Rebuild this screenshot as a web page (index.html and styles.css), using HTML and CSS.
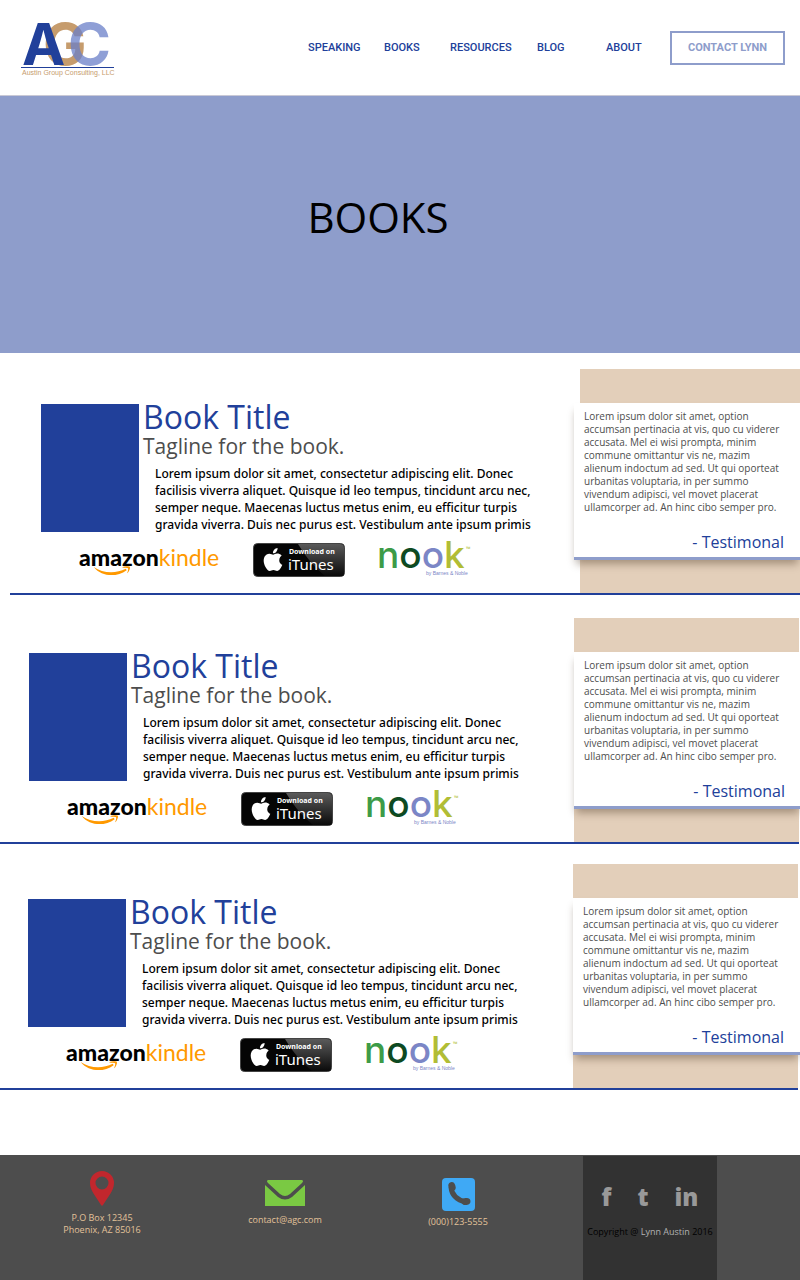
FILE: index.html
```html
<!DOCTYPE html>
<html lang="en">
<head>
<meta charset="utf-8">
<meta name="viewport" content="width=device-width, initial-scale=1">
<title>Books - Austin Group Consulting</title>
<link rel="stylesheet" href="styles.css">
</head>
<body>
<svg class="defs" width="0" height="0" aria-hidden="true">
  <defs>
    <linearGradient id="sheen" x1="0" y1="0" x2="0" y2="1">
      <stop offset="0" stop-color="#5a5a5a"/>
      <stop offset="1" stop-color="#0a0a0a"/>
    </linearGradient>
  </defs>
  <symbol id="smile" viewBox="0 0 42 12">
    <path d="M1 1C11 8 25 8.500 36 3l1 1.500C26 12.500 10 12 1 1z" fill="#f90"/>
    <path d="M32 1.500c3-1.500 8-1.500 8.500-.500s-.500 5-3 7c1-3 1.500-5 1-5.500s-3.500-.700-6.500-1z" fill="#f90"/>
  </symbol>
  <symbol id="badge" viewBox="0 0 92 34">
    <rect x=".5" y=".5" width="91" height="33" rx="4" fill="#050505" stroke="#444"/>
    <path d="M45 1h42q4 0 4 4v26q0 2-2 2H72Q56 20 45 1z" fill="url(#sheen)"/>
    <svg x="10" y="5" width="20" height="23" viewBox="1.500 0 21 24"><path fill="#fff" d="M12.152 6.896c-.948 0-2.415-1.078-3.960-1.040-2.040.027-3.910 1.183-4.961 3.014-2.117 3.675-.546 9.103 1.519 12.090 1.013 1.454 2.208 3.090 3.792 3.039 1.520-.065 2.090-.987 3.935-.987 1.831 0 2.350.987 3.960.948 1.637-.026 2.676-1.480 3.676-2.948 1.156-1.688 1.636-3.325 1.662-3.415-.039-.013-3.182-1.221-3.220-4.857-.026-3.040 2.480-4.494 2.597-4.559-1.429-2.090-3.623-2.324-4.390-2.376-2-.156-3.675 1.090-4.610 1.090zM15.530 3.830c.843-1.012 1.400-2.427 1.245-3.830-1.207.052-2.662.805-3.532 1.818-.780.896-1.454 2.338-1.273 3.714 1.338.104 2.715-.688 3.559-1.701"/></svg>
  </symbol>
</svg>

<header class="header">
  <a class="brand" href="#" aria-label="Austin Group Consulting, LLC">
    <svg width="96" height="56" viewBox="0 0 96 56">
      <text class="brand__g" x="22" y="45">G</text>
      <text class="brand__c" x="47" y="45">C</text>
      <text class="brand__a" x="1" y="45">A</text>
      <rect x="0" y="47" width="93" height="1" fill="#21409a"/>
      <text class="brand__name" x="1" y="55">Austin Group Consulting, LLC</text>
    </svg>
  </a>
  <nav class="nav">
    <a href="#">SPEAKING</a>
    <a href="#">BOOKS</a>
    <a href="#">RESOURCES</a>
    <a href="#">BLOG</a>
    <a href="#">ABOUT</a>
    <a class="nav__contact" href="#">CONTACT LYNN</a>
  </nav>
</header>

<main>
  <section class="hero"><h1 class="hero__title">BOOKS</h1></section>

  <article class="book book--first">
    <div class="book__main">
      <div class="book__cover"></div>
      <div class="book__text">
        <h2 class="book__title">Book Title</h2>
        <p class="book__tagline">Tagline for the book.</p>
        <p class="book__desc">Lorem ipsum dolor sit amet, consectetur adipiscing elit. Donec<br>facilisis viverra aliquet. Quisque id leo tempus, tincidunt arcu nec,<br>semper neque. Maecenas luctus metus enim, eu efficitur turpis<br>gravida viverra. Duis nec purus est. Vestibulum ante ipsum primis</p>
      </div>
      <div class="stores">
        <a href="#" aria-label="Amazon Kindle"><svg width="140" height="31" viewBox="0 0 140 31"><text class="kindle" x="0" y="20"><tspan class="kindle__a">amazon</tspan><tspan class="kindle__k">kindle</tspan></text><use href="#smile" x="12" y="20" width="42" height="11"/></svg></a>
        <a href="#" aria-label="Download on iTunes"><svg width="92" height="34" viewBox="0 0 92 34"><use href="#badge" width="92" height="34"/><text class="itunes__top" x="36" y="11">Download on</text><text class="itunes" x="35" y="27">iTunes</text></svg></a>
        <a href="#" aria-label="Nook by Barnes and Noble"><svg width="94" height="38" viewBox="0 0 94 38"><text class="nook" x="-2" y="29"><tspan fill="#3d9b47">n</tspan><tspan fill="#0e4a22">o</tspan><tspan fill="#7b86c6">o</tspan><tspan fill="#b1bd35">k</tspan></text><text class="nook__tm" x="87" y="12">™</text><text class="nook__by" x="47" y="36">by Barnes &amp; Noble</text></svg></a>
      </div>
    </div>
    <aside class="quote">
      <blockquote class="quote__card">
        <p class="quote__text">Lorem ipsum dolor sit amet, option<br>accumsan pertinacia at vis, quo cu viderer<br>accusata. Mel ei wisi prompta, minim<br>commune omittantur vis ne, mazim<br>alienum indoctum ad sed. Ut qui oporteat<br>urbanitas voluptaria, in per summo<br>vivendum adipisci, vel movet placerat<br>ullamcorper ad. An hinc cibo semper pro.</p>
        <footer class="quote__by">- Testimonal</footer>
      </blockquote>
    </aside>
  </article>

  <article class="book book--second">
    <div class="book__main">
      <div class="book__cover"></div>
      <div class="book__text">
        <h2 class="book__title">Book Title</h2>
        <p class="book__tagline">Tagline for the book.</p>
        <p class="book__desc">Lorem ipsum dolor sit amet, consectetur adipiscing elit. Donec<br>facilisis viverra aliquet. Quisque id leo tempus, tincidunt arcu nec,<br>semper neque. Maecenas luctus metus enim, eu efficitur turpis<br>gravida viverra. Duis nec purus est. Vestibulum ante ipsum primis</p>
      </div>
      <div class="stores">
        <a href="#" aria-label="Amazon Kindle"><svg width="140" height="31" viewBox="0 0 140 31"><text class="kindle" x="0" y="20"><tspan class="kindle__a">amazon</tspan><tspan class="kindle__k">kindle</tspan></text><use href="#smile" x="12" y="20" width="42" height="11"/></svg></a>
        <a href="#" aria-label="Download on iTunes"><svg width="92" height="34" viewBox="0 0 92 34"><use href="#badge" width="92" height="34"/><text class="itunes__top" x="36" y="11">Download on</text><text class="itunes" x="35" y="27">iTunes</text></svg></a>
        <a href="#" aria-label="Nook by Barnes and Noble"><svg width="94" height="38" viewBox="0 0 94 38"><text class="nook" x="-2" y="29"><tspan fill="#3d9b47">n</tspan><tspan fill="#0e4a22">o</tspan><tspan fill="#7b86c6">o</tspan><tspan fill="#b1bd35">k</tspan></text><text class="nook__tm" x="87" y="12">™</text><text class="nook__by" x="47" y="36">by Barnes &amp; Noble</text></svg></a>
      </div>
    </div>
    <aside class="quote">
      <blockquote class="quote__card">
        <p class="quote__text">Lorem ipsum dolor sit amet, option<br>accumsan pertinacia at vis, quo cu viderer<br>accusata. Mel ei wisi prompta, minim<br>commune omittantur vis ne, mazim<br>alienum indoctum ad sed. Ut qui oporteat<br>urbanitas voluptaria, in per summo<br>vivendum adipisci, vel movet placerat<br>ullamcorper ad. An hinc cibo semper pro.</p>
        <footer class="quote__by">- Testimonal</footer>
      </blockquote>
    </aside>
  </article>

  <article class="book book--third">
    <div class="book__main">
      <div class="book__cover"></div>
      <div class="book__text">
        <h2 class="book__title">Book Title</h2>
        <p class="book__tagline">Tagline for the book.</p>
        <p class="book__desc">Lorem ipsum dolor sit amet, consectetur adipiscing elit. Donec<br>facilisis viverra aliquet. Quisque id leo tempus, tincidunt arcu nec,<br>semper neque. Maecenas luctus metus enim, eu efficitur turpis<br>gravida viverra. Duis nec purus est. Vestibulum ante ipsum primis</p>
      </div>
      <div class="stores">
        <a href="#" aria-label="Amazon Kindle"><svg width="140" height="31" viewBox="0 0 140 31"><text class="kindle" x="0" y="20"><tspan class="kindle__a">amazon</tspan><tspan class="kindle__k">kindle</tspan></text><use href="#smile" x="12" y="20" width="42" height="11"/></svg></a>
        <a href="#" aria-label="Download on iTunes"><svg width="92" height="34" viewBox="0 0 92 34"><use href="#badge" width="92" height="34"/><text class="itunes__top" x="36" y="11">Download on</text><text class="itunes" x="35" y="27">iTunes</text></svg></a>
        <a href="#" aria-label="Nook by Barnes and Noble"><svg width="94" height="38" viewBox="0 0 94 38"><text class="nook" x="-2" y="29"><tspan fill="#3d9b47">n</tspan><tspan fill="#0e4a22">o</tspan><tspan fill="#7b86c6">o</tspan><tspan fill="#b1bd35">k</tspan></text><text class="nook__tm" x="87" y="12">™</text><text class="nook__by" x="47" y="36">by Barnes &amp; Noble</text></svg></a>
      </div>
    </div>
    <aside class="quote">
      <blockquote class="quote__card">
        <p class="quote__text">Lorem ipsum dolor sit amet, option<br>accumsan pertinacia at vis, quo cu viderer<br>accusata. Mel ei wisi prompta, minim<br>commune omittantur vis ne, mazim<br>alienum indoctum ad sed. Ut qui oporteat<br>urbanitas voluptaria, in per summo<br>vivendum adipisci, vel movet placerat<br>ullamcorper ad. An hinc cibo semper pro.</p>
        <footer class="quote__by">- Testimonal</footer>
      </blockquote>
    </aside>
  </article>
</main>

<footer class="footer">
  <address class="contact contact--place">
    <svg width="24" height="35" viewBox="0 0 24 35" aria-hidden="true"><path fill="#c1272d" fill-rule="evenodd" d="M12 0a12 12 0 0 1 12 12c0 4-1.500 7-3.500 10.500L13 34q-1 1.500-2 0L3.500 22.500C1.500 19 0 16 0 12A12 12 0 0 1 12 0zm0 5.500a6.500 6.500 0 1 0 0 13 6.500 6.500 0 0 0 0-13z"/></svg>
    <span>P.O Box 12345<br>Phoenix, AZ 85016</span>
  </address>
  <a class="contact contact--mail" href="mailto:contact@agc.com">
    <svg width="40" height="26" viewBox="0 0 40 26" aria-hidden="true"><path fill="#7ac943" d="M3 0h34q2 1 0 3L25 14q-5 4-10 0L3 3Q1 1 3 0zM0 5l13 12q7 5 14 0L40 5v21H0z"/></svg>
    <span>contact@agc.com</span>
  </a>
  <a class="contact contact--phone" href="tel:0001235555">
    <svg width="33" height="33" viewBox="0 0 33 33" aria-hidden="true"><rect width="33" height="33" rx="4" fill="#3fa9f5"/><path d="M9 9Q10 21 24 24" fill="none" stroke="#4d4d4d" stroke-width="5"/><ellipse cx="10" cy="8.500" rx="3.500" ry="4.500" transform="rotate(-18 10 8.500)" fill="#4d4d4d"/><ellipse cx="24" cy="23.500" rx="4.500" ry="3.500" transform="rotate(-10 24 23.500)" fill="#4d4d4d"/></svg>
    <span>(000)123-5555</span>
  </a>
  <div class="social">
    <div class="social__links">
      <a href="#" aria-label="Facebook">f</a>
      <a href="#" aria-label="Tumblr">t</a>
      <a href="#" aria-label="LinkedIn">in</a>
    </div>
    <p class="social__copy">Copyright @ <a href="#">Lynn Austin</a> 2016</p>
  </div>
</footer>
</body>
</html>
```
FILE: styles.css
```css
* { box-sizing: border-box; }
body {
  margin: 0;
  background: #fff;
  color: #000;
  font-family: "Open Sans", "Noto Sans", sans-serif;
}
a { color: inherit; text-decoration: none; }
h1, h2, p, blockquote { margin: 0; font-weight: 400; }
svg { display: block; overflow: visible; }
.defs { position: absolute; }

.header {
  display: flex;
  justify-content: space-between;
  align-items: center;
  height: 96px;
  padding: 0 15px 0 21px;
  border-bottom: 1px solid #c9c9d6;
}
.brand__a, .brand__g, .brand__c { font: bold 58px "Inter", sans-serif; }
.brand__a { fill: #21409a; }
.brand__g { fill: #c69c6d; }
.brand__c { fill: #6a7fc8; fill-opacity: .75; }
.brand__name { font: 7px "Liberation Sans", sans-serif; fill: #c69c6d; }
.nav {
  display: grid;
  grid-template-columns: 76px 66px 87px 69px 64px 115px;
  align-items: center;
  color: #21409a;
  font: 500 11px "Roboto", sans-serif;
}
.nav__contact {
  padding: 7px 0;
  border: 2px solid #8e9dcb;
  color: #8e9dcb;
  font-weight: 700;
  line-height: 16px;
  text-align: center;
}

.hero {
  display: grid;
  place-items: center;
  height: 257px;
  padding: 0 44px 16px 0;
  background: #8e9dcb;
}
.hero__title { font-size: 42px; line-height: 56px; }

.book { display: flex; border-bottom: 2px solid #21409a; }
.book--first { margin: 16px 0 0 10px; padding-left: 31px; }
.book--second { margin: 23px 1px 0 0; padding-left: 29px; }
.book--third { margin: 20px 2px 65px 0; padding-left: 28px; }
.book__main {
  flex: 1;
  display: grid;
  grid-template-columns: 98px 1fr;
  grid-template-rows: 129px auto;
  padding-top: 35px;
}
.book__cover { height: 128px; background: #21409a; }
.book__text { padding-left: 4px; white-space: nowrap; }
.book__title { color: #21409a; font-size: 32px; line-height: 26px; }
.book__tagline { color: #4d4d4d; font-size: 21px; line-height: 32px; }
.book__desc {
  margin-top: 3px;
  padding-left: 12px;
  font-family: "Noto Sans", sans-serif;
  font-size: 12px;
  font-weight: 500;
  line-height: 17px;
}
.stores {
  grid-column: 1 / -1;
  display: flex;
  align-items: flex-end;
  height: 44px;
  padding-left: 38px;
}
.stores a + a { margin-left: 34px; }
.kindle { font-family: "Lato", sans-serif; font-size: 23px; }
.kindle__a { font-weight: 900; }
.kindle__k { fill: #f90; }
.itunes__top { font: bold 7px "Noto Sans", sans-serif; fill: #fff; }
.itunes { font: 15px "Noto Sans", sans-serif; fill: #fff; }
.nook { font: 500 37px "Inter", sans-serif; }
.nook__tm { font-size: 6px; fill: #b1bd35; }
.nook__by { font: 5px "Liberation Sans", sans-serif; fill: #7b86c6; }

.quote {
  flex: 0 0 225px;
  padding: 34px 0 33px;
  background: #e3cfba;
}
.quote__card {
  height: 157px;
  margin-right: -2px;
  padding: 7px 16px 0 10px;
  border-bottom: 3px solid #8e9dcb;
  background: #fff;
  box-shadow: 0 6px 8px -2px rgba(70, 50, 30, .4);
  white-space: nowrap;
}
.book--first .quote { flex-basis: 220px; }
.book--first .quote__card { margin: 0 0 0 -6px; }
.quote__text {
  color: #4d4d4d;
  font: 10px/13px "Open Sans", sans-serif;
}
.quote__by {
  margin-top: 16px;
  color: #21409a;
  font-size: 16px;
  line-height: 24px;
  text-align: right;
}
main { overflow-x: clip; }

.footer {
  display: grid;
  grid-template-columns: 204fr 162fr 184fr 33fr 134fr 83fr;
  min-height: 125px;
  background: #4d4d4d;
}
.contact {
  display: flex;
  flex-direction: column;
  align-items: center;
  color: #e3c29a;
  font: 9px/12px "Open Sans", sans-serif;
  text-align: center;
}
.contact--place { gap: 6px; padding-top: 16px; }
.contact--mail { gap: 8px; padding-top: 25px; }
.contact--phone { gap: 5px; padding-top: 23px; }
.social {
  grid-column: 5;
  margin-top: 1px;
  padding-top: 27px;
  background: #323232;
  white-space: nowrap;
}
.social__links {
  display: flex;
  justify-content: center;
  gap: 26px;
  color: #999;
  font-size: 24px;
  font-weight: 800;
  line-height: 28px;
}
.social__copy {
  margin-top: 14px;
  font: 9px/14px "Open Sans", sans-serif;
  text-align: center;
}
.social__copy a { color: #b3b3b3; }
```
